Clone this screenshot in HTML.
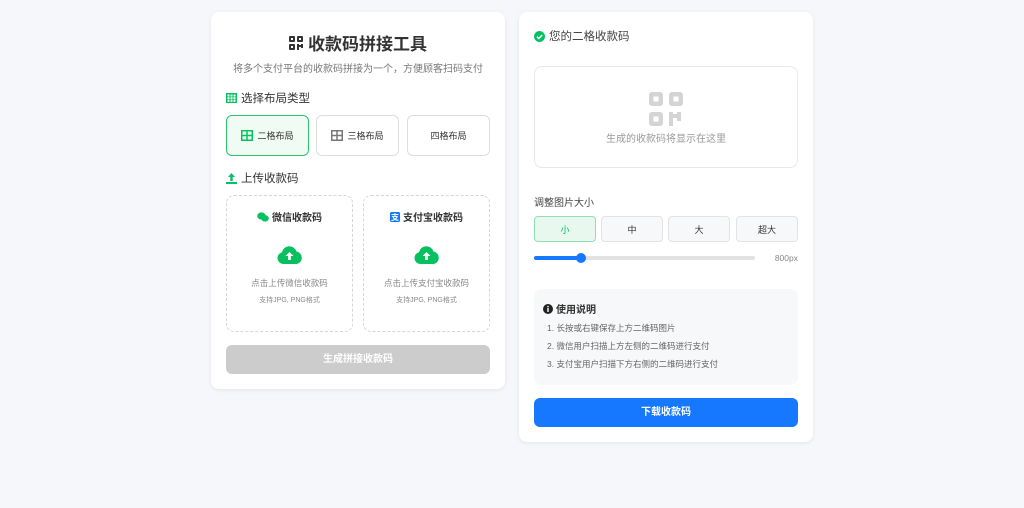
<!DOCTYPE html>
<html><head><meta charset="utf-8"><style>
*{box-sizing:border-box;margin:0;padding:0}
body{width:1024px;height:508px;background:#f5f7fa;font-family:"Liberation Sans","Noto Sans CJK SC",sans-serif;position:relative;overflow:hidden;color:#333}
.card{position:absolute;background:#fff;border-radius:8px;box-shadow:0 1px 4px rgba(0,0,0,.08)}
.a{position:absolute}
.c{text-align:center}
.lb{position:absolute;border:1px solid #ddd;border-radius:6px;background:#fff;font-size:9px;color:#333;display:flex;align-items:center;justify-content:center;gap:4px}
.up{position:absolute;border:1px dashed #d6d6d6;border-radius:8px;top:195px;height:137px;width:127px}
.sb{position:absolute;top:216px;height:26px;border:1px solid #e3e3e3;border-radius:4px;background:#f7f8fa;font-size:9px;display:flex;align-items:center;justify-content:center}
</style></head><body>
<div class="card" style="left:211px;top:12px;width:294px;height:377px"></div>
<div class="card" style="left:519px;top:12px;width:294px;height:430px"></div>

<div class="a" style="left:211px;width:294px;top:30px;display:flex;justify-content:center;align-items:center;gap:5px">
<svg width="14" height="14" viewBox="0 0 14 14" fill="#333"><rect x="0" y="0" width="6" height="6" rx="1"/><rect x="8" y="0" width="6" height="6" rx="1"/><rect x="0" y="8" width="6" height="6" rx="1"/><rect x="8" y="8" width="2" height="6"/><rect x="12" y="8" width="2" height="4"/><rect x="10" y="9" width="2" height="2"/><rect x="2" y="2" width="2" height="2" fill="#fff"/><rect x="10" y="2" width="2" height="2" fill="#fff"/><rect x="2" y="10" width="2" height="2" fill="#fff"/></svg>
<span style="font-size:17px;font-weight:bold;color:#333">收款码拼接工具</span></div>
<div class="a c" style="left:211px;width:294px;top:60px;font-size:10px;color:#777">将多个支付平台的收款码拼接为一个，方便顾客扫码支付</div>
<div class="a" style="left:226px;top:90px;font-size:11.5px;display:flex;align-items:center;gap:4px"><svg width="11" height="10" viewBox="0 0 11 10"><rect x="0" y="0" width="11" height="10" fill="#07c160"/><g fill="#fff"><rect x="1.5" y="1.5" width="2" height="2"/><rect x="4.5" y="1.5" width="2" height="2"/><rect x="7.5" y="1.5" width="2" height="2"/><rect x="1.5" y="4.2" width="2" height="2"/><rect x="4.5" y="4.2" width="2" height="2"/><rect x="7.5" y="4.2" width="2" height="2"/><rect x="1.5" y="6.8" width="2" height="2"/><rect x="4.5" y="6.8" width="2" height="2"/><rect x="7.5" y="6.8" width="2" height="2"/></g></svg>选择布局类型</div>
<div class="lb" style="left:226px;top:115px;width:83px;height:41px;border-color:#2dc26b;background:#f0fbf4"><svg width="12" height="11" viewBox="0 0 12 11"><rect x="0.75" y="0.75" width="10.5" height="9.5" fill="none" stroke="#07c160" stroke-width="1.5"/><path d="M6 0v11M0 5.5h12" stroke="#07c160" stroke-width="1.5"/></svg>二格布局</div>
<div class="lb" style="left:316px;top:115px;width:83px;height:41px"><svg width="12" height="11" viewBox="0 0 12 11"><rect x="0.75" y="0.75" width="10.5" height="9.5" fill="none" stroke="#777" stroke-width="1.5"/><path d="M6 0v11M0 5.5h12" stroke="#777" stroke-width="1.5"/></svg>三格布局</div>
<div class="lb" style="left:407px;top:115px;width:83px;height:41px">四格布局</div>
<div class="a" style="left:226px;top:170px;font-size:11.5px;display:flex;align-items:center;gap:4px"><svg width="11" height="11" viewBox="0 0 11 11" fill="#07c160"><path d="M5.5 0L9 4H6.7v4H4.3V4H2z"/><rect x="0" y="9" width="11" height="2"/></svg>上传收款码</div>

<div class="up" style="left:226px"></div>
<div class="up" style="left:363px"></div>
<div class="a" style="left:226px;width:127px;top:209px;display:flex;justify-content:center;align-items:center;gap:3px;font-size:10px;font-weight:bold"><svg width="12" height="10" viewBox="0 0 12 10" fill="#07c160"><ellipse cx="4.5" cy="4" rx="4.3" ry="3.6"/><ellipse cx="8" cy="6.3" rx="3.8" ry="3.2"/></svg>微信收款码</div>
<div class="a" style="left:363px;width:127px;top:209px;display:flex;justify-content:center;align-items:center;gap:3px;font-size:10px;font-weight:bold"><svg width="10" height="10" viewBox="0 0 10 10"><rect width="10" height="10" rx="1.5" fill="#1677ff"/><text x="5" y="8" font-size="8" fill="#fff" text-anchor="middle" font-family="Noto Sans CJK SC">支</text></svg>支付宝收款码</div>
<svg class="a" style="left:277px;top:246px" width="25" height="18" viewBox="0 0 25 18"><path d="M6 18A6 6 0 0 1 5 6.2 7.5 7.5 0 0 1 19.5 5.5 6.3 6.3 0 0 1 19 18z" fill="#07c160"/><path d="M12.5 6l-4 4h2.6v4h2.8v-4h2.6z" fill="#fff"/></svg>
<svg class="a" style="left:414px;top:246px" width="25" height="18" viewBox="0 0 25 18"><path d="M6 18A6 6 0 0 1 5 6.2 7.5 7.5 0 0 1 19.5 5.5 6.3 6.3 0 0 1 19 18z" fill="#07c160"/><path d="M12.5 6l-4 4h2.6v4h2.8v-4h2.6z" fill="#fff"/></svg>
<div class="a c" style="left:226px;width:127px;top:277px;font-size:8.5px;color:#888">点击上传微信收款码</div>
<div class="a c" style="left:363px;width:127px;top:277px;font-size:8.5px;color:#888">点击上传支付宝收款码</div>
<div class="a c" style="left:226px;width:127px;top:295px;font-size:7px;color:#888">支持JPG, PNG格式</div>
<div class="a c" style="left:363px;width:127px;top:295px;font-size:7px;color:#888">支持JPG, PNG格式</div>
<div class="a c" style="left:226px;top:345px;width:264px;height:29px;background:#cccccc;border-radius:6px;color:#fff;font-weight:bold;font-size:10px;line-height:29px">生成拼接收款码</div>

<div class="a" style="left:534px;top:28px;font-size:11.5px;display:flex;align-items:center;gap:4px;color:#444"><svg width="11" height="11" viewBox="0 0 11 11"><circle cx="5.5" cy="5.5" r="5.5" fill="#07c160"/><path d="M3 5.7l1.8 1.8L8.2 4" stroke="#fff" stroke-width="1.5" fill="none"/></svg>您的二格收款码</div>
<div class="a" style="left:534px;top:66px;width:264px;height:102px;border:1px solid #e8e8e8;border-radius:8px"></div>
<svg class="a" style="left:649px;top:92px" width="34" height="34" viewBox="0 0 34 34" fill="#d4d4d4"><path fill-rule="evenodd" d="M0 3a3 3 0 0 1 3-3h8a3 3 0 0 1 3 3v8a3 3 0 0 1-3 3H3a3 3 0 0 1-3-3zM4.5 4.5h5v5h-5zM20 3a3 3 0 0 1 3-3h8a3 3 0 0 1 3 3v8a3 3 0 0 1-3 3h-8a3 3 0 0 1-3-3zM24.5 4.5h5v5h-5zM0 23a3 3 0 0 1 3-3h8a3 3 0 0 1 3 3v8a3 3 0 0 1-3 3H3a3 3 0 0 1-3-3zM4.5 24.5h5v5h-5z"/><path d="M20 20h4v14h-4zM24 22h4v4h-4zM28 20h4v9h-4z"/></svg>
<div class="a c" style="left:534px;width:264px;top:130px;font-size:10px;color:#999">生成的收款码将显示在这里</div>
<div class="a" style="left:534px;top:194px;font-size:10px;color:#444">调整图片大小</div>
<div class="sb" style="left:534px;width:62px;border-color:#8fe0b0;background:#e8f8ee;color:#07c160">小</div>
<div class="sb" style="left:601px;width:62px">中</div>
<div class="sb" style="left:668px;width:62px">大</div>
<div class="sb" style="left:736px;width:62px">超大</div>
<div class="a" style="left:534px;top:256px;width:221px;height:4px;border-radius:2px;background:#e2e2e2"></div>
<div class="a" style="left:534px;top:256px;width:47px;height:4px;border-radius:2px;background:#1677ff"></div>
<div class="a" style="left:576px;top:253px;width:10px;height:10px;border-radius:50%;background:#1677ff"></div>
<div class="a" style="left:740px;width:58px;text-align:right;top:253px;font-size:8.5px;color:#888">800px</div>
<div class="a" style="left:534px;top:289px;width:264px;height:96px;background:#f7f8fa;border-radius:8px"></div>
<div class="a" style="left:543px;top:301px;font-size:10px;font-weight:bold;display:flex;align-items:center;gap:3px"><svg width="10" height="10" viewBox="0 0 10 10"><circle cx="5" cy="5" r="5" fill="#222"/><rect x="4.3" y="4" width="1.4" height="4" fill="#fff"/><circle cx="5" cy="2.6" r=".8" fill="#fff"/></svg>使用说明</div>
<div class="a" style="left:547px;top:322px;font-size:8.5px;color:#666">1. 长按或右键保存上方二维码图片</div>
<div class="a" style="left:547px;top:340px;font-size:8.5px;color:#666">2. 微信用户扫描上方左侧的二维码进行支付</div>
<div class="a" style="left:547px;top:358px;font-size:8.5px;color:#666">3. 支付宝用户扫描下方右侧的二维码进行支付</div>
<div class="a c" style="left:534px;top:398px;width:264px;height:29px;background:#1677ff;border-radius:6px;color:#fff;font-weight:bold;font-size:10px;line-height:29px">下载收款码</div>
</body></html>
